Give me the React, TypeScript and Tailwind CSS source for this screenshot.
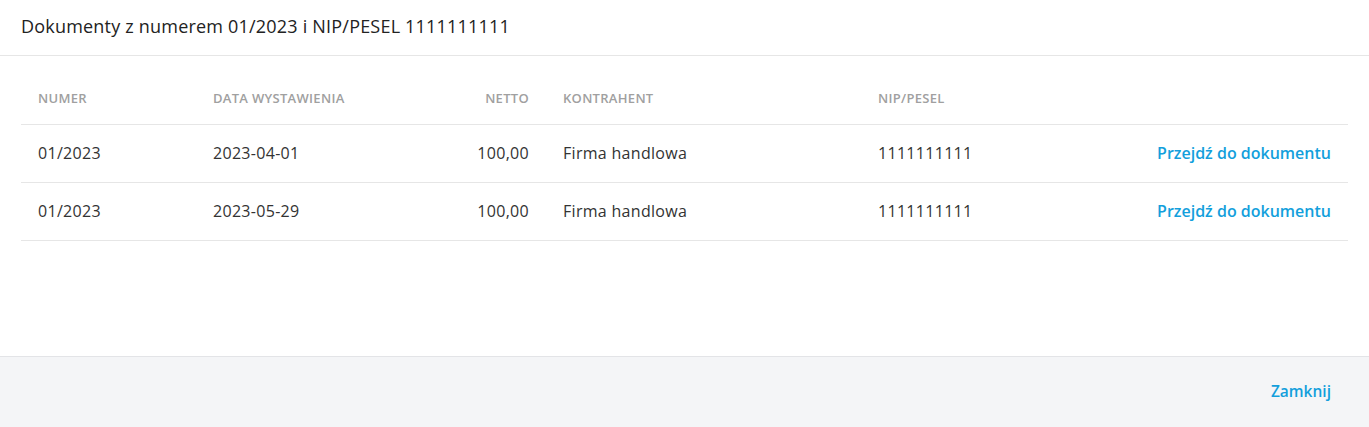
const rows = [
  { numer: '01/2023', data: '2023-04-01', netto: '100,00', kontrahent: 'Firma handlowa', nip: '1111111111' },
  { numer: '01/2023', data: '2023-05-29', netto: '100,00', kontrahent: 'Firma handlowa', nip: '1111111111' },
];

export default function App() {
  return (
    <div className="flex h-[427px] w-full flex-col bg-white font-['Open_Sans',sans-serif] text-[#333]">
      {/* Header */}
      <div className="flex h-[56px] items-center border-b border-[#e6e6e6] px-[21px] pb-[2px]">
        <h2 className="text-[18px] tracking-[0.2px] text-[#222]">Dokumenty z numerem 01/2023 i NIP/PESEL 1111111111</h2>
      </div>

      {/* Body */}
      <div className="flex-1 px-[21px] pt-[18px]">
        <table className="w-full table-fixed border-collapse">
          <colgroup>
            <col className="w-[175px]" />
            <col className="w-[200px]" />
            <col className="w-[150px]" />
            <col className="w-[315px]" />
            <col className="w-[240px]" />
            <col />
          </colgroup>
          <thead>
            <tr className="h-[50px] border-b border-[#e6e6e6] text-left text-[13px] font-semibold uppercase tracking-[0.3px] text-[#a0a0a0]">
              <th className="px-[17px] font-semibold">Numer</th>
              <th className="px-[17px] font-semibold">Data wystawienia</th>
              <th className="px-[17px] text-right font-semibold">Netto</th>
              <th className="px-[17px] font-semibold">Kontrahent</th>
              <th className="px-[17px] font-semibold">NIP/PESEL</th>
              <th className="px-[17px]" />
            </tr>
          </thead>
          <tbody>
            {rows.map((row, idx) => (
              <tr key={idx} className="h-[58px] border-b border-[#e6e6e6] text-[16px] tracking-[0.3px]">
                <td className="px-[17px]">{row.numer}</td>
                <td className="px-[17px]">{row.data}</td>
                <td className="px-[17px] text-right">{row.netto}</td>
                <td className="px-[17px]">{row.kontrahent}</td>
                <td className="px-[17px]">{row.nip}</td>
                <td className="px-[17px] text-right">
                  <a href="#" className="font-semibold tracking-normal text-[#139fdc]">Przejdź do dokumentu</a>
                </td>
              </tr>
            ))}
          </tbody>
        </table>
      </div>

      {/* Footer */}
      <div className="flex h-[71px] items-center justify-end border-t border-[#e3e4e7] bg-[#f4f5f7] px-[38px]">
        <button className="text-[15.5px] font-semibold text-[#139fdc]">Zamknij</button>
      </div>
    </div>
  );
}
